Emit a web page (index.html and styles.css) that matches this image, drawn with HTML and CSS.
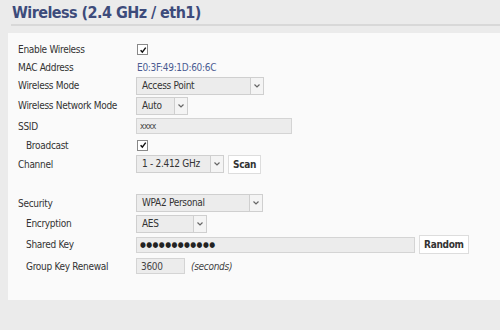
FILE: index.html
```html
<!DOCTYPE html>
<html lang="en">
<head>
    <meta charset="UTF-8">
    <title>Wireless</title>
    <link rel="stylesheet" href="styles.css">
</head>
<body>
    <h1 class="title">Wireless (2.4 GHz / eth1)</h1>

    <div class="panel">
        <div class="row r17">
            <label>Enable Wireless</label>
            <span class="check"><svg viewBox="0 0 10 10" width="10" height="10"><path d="M2 5.2 L4.2 7.6 L8.4 2" fill="none" stroke="#111" stroke-width="1.8"/></svg></span>
        </div>
        <div class="row r18">
            <label>MAC Address</label>
            <span class="mac">E0:3F:49:1D:60:6C</span>
        </div>
        <div class="row r19">
            <label>Wireless Mode</label>
            <span class="select w128"><span class="val">Access Point</span><span class="arrow"></span></span>
        </div>
        <div class="row r21">
            <label>Wireless Network Mode</label>
            <span class="select w52"><span class="val">Auto</span><span class="arrow"></span></span>
        </div>
        <div class="row r20">
            <label>SSID</label>
            <input class="text w156 small" type="text" value="xxxx">
        </div>
        <div class="row r18">
            <label class="sub">Broadcast</label>
            <span class="check"><svg viewBox="0 0 10 10" width="10" height="10"><path d="M2 5.2 L4.2 7.6 L8.4 2" fill="none" stroke="#111" stroke-width="1.8"/></svg></span>
        </div>
        <div class="row r20">
            <label>Channel</label>
            <span class="select w88"><span class="val">1 - 2.412 GHz</span><span class="arrow"></span></span>
            <button>Scan</button>
        </div>

        <div class="spacer"></div>

        <div class="row r20">
            <label>Security</label>
            <span class="select w127"><span class="val">WPA2 Personal</span><span class="arrow"></span></span>
        </div>
        <div class="row r21">
            <label class="sub">Encryption</label>
            <span class="select w71"><span class="val">AES</span><span class="arrow"></span></span>
        </div>
        <div class="row r21">
            <label class="sub">Shared Key</label>
            <input class="text w279 dots" type="text" value="&#9679;&#9679;&#9679;&#9679;&#9679;&#9679;&#9679;&#9679;&#9679;&#9679;&#9679;&#9679;">
            <button>Random</button>
        </div>
        <div class="row r22">
            <label class="sub">Group Key Renewal</label>
            <input class="text w49" type="text" value="3600">
            <span class="hint">(seconds)</span>
        </div>
    </div>
</body>
</html>
```

FILE: styles.css
```css
body {
    margin: 0;
    background: #ebebeb;
    font-family: "DejaVu Sans Condensed", "Liberation Sans", sans-serif;
    font-size: 10px;
    letter-spacing: -0.3px;
    color: #333;
}
.title {
    margin: 0 0 0 11px;
    padding: 5px 0 3px 1px;
    font-size: 16px;
    letter-spacing: -0.55px;
    color: #3d4b7b;
    border-bottom: 2px solid #d8d8d8;
    line-height: 16px;
}
.panel {
    background: #fafafa;
    margin: 7px 0 0 8px;
    padding: 8px 0 0 10px;
    height: 267px;
    box-sizing: border-box;
}
.row {
    display: flex;
    align-items: center;
    white-space: nowrap;
}
.r17 { height: 17px; }
.r18 { height: 18px; }
.r19 { height: 19px; }
.r20 { height: 20px; }
.r21 { height: 21px; }
.r22 { height: 22px; }
.spacer { height: 19px; }
.row label {
    width: 118px;
    flex: none;
}
.row label.sub {
    padding-left: 8px;
    box-sizing: border-box;
}
.check {
    width: 9px;
    height: 9px;
    border: 1px solid #888;
    background: #fff;
    margin-left: 1px;
    display: flex;
    align-items: center;
    justify-content: center;
}
.check svg {
    width: 8px;
    height: 8px;
}
.mac {
    color: #4a5c92;
    margin-left: 1px;
}
.select {
    display: flex;
    border: 1px solid #cfcfcf;
    background: #ececec;
    box-sizing: border-box;
    height: 18px;
    overflow: hidden;
}
.select .val {
    flex: 1;
    padding-left: 5px;
    line-height: 16px;
    color: #333;
}
.select .arrow {
    width: 12px;
    flex: none;
    border-left: 1px solid #cfcfcf;
    background: #f4f4f4 url("data:image/svg+xml,%3Csvg xmlns='http://www.w3.org/2000/svg' width='6' height='4'%3E%3Cpath d='M0.5 0.5 L3 3 L5.5 0.5' fill='none' stroke='%23666' stroke-width='1.2'/%3E%3C/svg%3E") no-repeat center;
}
.w128 { width: 128px; }
.w127 { width: 127px; }
.w52 { width: 52px; }
.w88 { width: 88px; }
.w71 { width: 71px; }
.w156 { width: 156px; }
.w279 { width: 279px; }
.w49 { width: 49px; }
.text {
    font: inherit;
    letter-spacing: inherit;
    height: 16px;
    box-sizing: border-box;
    border: 1px solid #d4d4d4;
    background: #ececec;
    padding: 0 4px;
    color: #444;
    margin: 0;
}
.text.small {
    font-size: 8.5px;
    letter-spacing: -0.6px;
    padding-left: 3px;
}
.text.dots {
    font-size: 7.5px;
    letter-spacing: 0.4px;
    padding-left: 3px;
    color: #222;
}
button {
    font: inherit;
    letter-spacing: inherit;
    font-weight: bold;
    color: #333;
    background: #fff;
    border: 1px solid #ddd;
    height: 19px;
    padding: 0 4px;
    margin-left: 4px;
}
.hint {
    font-style: italic;
    margin-left: 6px;
    color: #444;
}
```
